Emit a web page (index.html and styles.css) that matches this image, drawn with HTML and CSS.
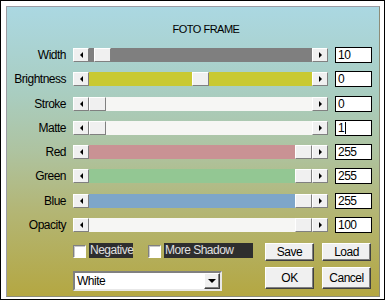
FILE: index.html
```html
<!DOCTYPE html>
<html lang="en">
<head>
  <meta charset="UTF-8">
  <title>Foto Frame</title>
  <link rel="stylesheet" href="styles.css">
</head>
<body>
  <div class="frame">
    <div class="panel">
      <h1 class="title">FOTO FRAME</h1>

      <div class="sliders">
        <span class="name">Width</span>
        <div class="scroll">
          <span class="arrow left"></span>
          <div class="track gray"><span class="thumb" style="--pos:0.024"></span></div>
          <span class="arrow right"></span>
        </div>
        <span class="field">10</span>

        <span class="name">Brightness</span>
        <div class="scroll">
          <span class="arrow left"></span>
          <div class="track yellow"><span class="thumb" style="--pos:0.5"></span></div>
          <span class="arrow right"></span>
        </div>
        <span class="field">0</span>

        <span class="name">Stroke</span>
        <div class="scroll">
          <span class="arrow left"></span>
          <div class="track light"><span class="thumb" style="--pos:0"></span></div>
          <span class="arrow right"></span>
        </div>
        <span class="field">0</span>

        <span class="name">Matte</span>
        <div class="scroll">
          <span class="arrow left"></span>
          <div class="track light"><span class="thumb" style="--pos:0"></span></div>
          <span class="arrow right"></span>
        </div>
        <span class="field">1<span class="caret"></span></span>

        <span class="name">Red</span>
        <div class="scroll">
          <span class="arrow left"></span>
          <div class="track red"><span class="thumb" style="--pos:1"></span></div>
          <span class="arrow right"></span>
        </div>
        <span class="field">255</span>

        <span class="name">Green</span>
        <div class="scroll">
          <span class="arrow left"></span>
          <div class="track green"><span class="thumb" style="--pos:1"></span></div>
          <span class="arrow right"></span>
        </div>
        <span class="field">255</span>

        <span class="name">Blue</span>
        <div class="scroll">
          <span class="arrow left"></span>
          <div class="track blue"><span class="thumb" style="--pos:1"></span></div>
          <span class="arrow right"></span>
        </div>
        <span class="field">255</span>

        <span class="name">Opacity</span>
        <div class="scroll">
          <span class="arrow left"></span>
          <div class="track light"><span class="thumb" style="--pos:1"></span></div>
          <span class="arrow right"></span>
        </div>
        <span class="field">100</span>
      </div>

      <div class="bottom">
        <div class="options">
          <div class="checks">
            <span class="box"></span>
            <span class="check-label">Negative</span>
            <span class="box second"></span>
            <span class="check-label wide">More Shadow</span>
          </div>
          <div class="select">
            <span class="select-text">White</span>
            <span class="drop"></span>
          </div>
        </div>
        <div class="buttons">
          <button class="btn">Save</button>
          <button class="btn">Load</button>
          <button class="btn tall">OK</button>
          <button class="btn tall">Cancel</button>
        </div>
      </div>
    </div>
  </div>
</body>
</html>
```

FILE: styles.css
```css
:root {
  --face: #f0f0f0;
  --shadow: #808080;
  --dark: #404040;
}

* {
  margin: 0;
  padding: 0;
  box-sizing: border-box;
}

body {
  font-family: "Liberation Sans", Arial, sans-serif;
  font-size: 12px;
  letter-spacing: -0.5px;
  color: #000;
  background: #fff;
}

.frame {
  width: 385px;
  height: 300px;
  border: 1px solid #000;
  padding: 5px 4px 2px 5px;
  background: #fff;
}

.panel {
  height: 100%;
  border: 1px solid #9c9ca4;
  border-right-color: #8c8c78;
  border-bottom-color: #8c8c78;
  padding-top: 16px;
  background: linear-gradient(#abd8e2 0%, #a9cdc0 30%, #aec3a0 50%, #b3b676 70%, #b4a742 100%);
}

.title {
  font-size: 11px;
  font-weight: normal;
  line-height: 13px;
  text-align: center;
  padding-left: 26px;
  margin-bottom: 11px;
}

/* slider rows */
.sliders {
  display: grid;
  grid-template-columns: 59px 255px 37px;
  grid-auto-rows: 16px;
  column-gap: 7px;
  row-gap: 8.3px;
  align-items: center;
}

.name {
  text-align: right;
  line-height: 14px;
}

.scroll {
  display: flex;
  height: 14px;
}

.arrow {
  width: 16px;
  height: 14px;
  flex: none;
  display: flex;
  align-items: center;
  justify-content: center;
  background: var(--face);
  border: 1px solid #fff;
  border-right-color: var(--shadow);
  border-bottom-color: var(--shadow);
}

.arrow::before {
  content: "";
  border-top: 3px solid transparent;
  border-bottom: 3px solid transparent;
}

.arrow.left::before {
  border-right: 3px solid #000;
}

.arrow.right::before {
  border-left: 3px solid #000;
}

.track {
  flex: 1;
  position: relative;
}

.track.gray { background: #7f7f7f; }
.track.yellow { background: #c9c932; }
.track.light { background: #f6f6f4; }
.track.red { background: #c99294; }
.track.green { background: #93c793; }
.track.blue { background: #7ea6c9; }

.thumb {
  position: absolute;
  top: 0;
  left: calc((100% - 17px) * var(--pos));
  width: 17px;
  height: 14px;
  background: var(--face);
  border: 1px solid #fff;
  border-right-color: var(--shadow);
  border-bottom-color: var(--shadow);
}

.field {
  height: 16px;
  background: #fff;
  border: 1px solid #000;
  padding-left: 2px;
  font-size: 12px;
  line-height: 14px;
  display: flex;
  align-items: center;
}

.caret {
  width: 1px;
  height: 12px;
  background: #000;
  margin-left: 1px;
}

/* bottom area */
.bottom {
  display: flex;
  margin-top: 10px;
  padding-left: 66px;
}

.options {
  width: 192px;
}

.checks {
  display: flex;
  align-items: flex-end;
  height: 15px;
}

.box {
  width: 13px;
  height: 13px;
  background: #fff;
  border: 1px solid var(--shadow);
  border-right-color: #fff;
  border-bottom-color: #fff;
  box-shadow: inset 1px 1px 0 #c8c8c8;
}

.box.second {
  margin-left: 15px;
}

.check-label {
  width: 44px;
  height: 15px;
  margin-left: 3px;
  padding-left: 1px;
  background: #2e2e2e;
  color: #e0e0e0;
  line-height: 15px;
}

.check-label.wide {
  width: 89px;
}

.select {
  display: flex;
  justify-content: space-between;
  align-items: center;
  width: 149px;
  height: 20px;
  margin-top: 13px;
  background: #fff;
  border: 2px solid var(--shadow);
  border-right-color: #e8e8e8;
  border-bottom-color: #e8e8e8;
  padding-left: 2px;
}

.drop {
  width: 16px;
  height: 16px;
  display: flex;
  align-items: center;
  justify-content: center;
  background: var(--face);
  border: 1px solid #fff;
  border-right-color: var(--dark);
  border-bottom-color: var(--dark);
  box-shadow: inset -1px -1px 0 var(--shadow);
}

.drop::before {
  content: "";
  border-left: 4px solid transparent;
  border-right: 4px solid transparent;
  border-top: 4px solid #000;
}

.buttons {
  display: grid;
  grid-template-columns: 49px 49px;
  grid-template-rows: 18px 22px;
  column-gap: 8px;
  row-gap: 6px;
}

.btn {
  font: inherit;
  letter-spacing: inherit;
  color: #000;
  background: var(--face);
  border: 1px solid #fff;
  border-right-color: var(--dark);
  border-bottom-color: var(--dark);
  box-shadow: inset -1px -1px 0 var(--shadow);
}
```
